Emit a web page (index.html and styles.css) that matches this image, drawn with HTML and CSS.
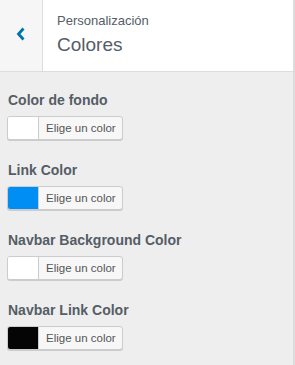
FILE: index.html
```html
<!DOCTYPE html>
<html>
<head>
  <meta charset="utf-8">
  <link rel="stylesheet" href="styles.css">
  <title>Colores</title>
</head>
<body>
  <div class="panel">
    <div class="panel-header">
      <button class="back-btn" aria-label="Volver">
        <svg width="10" height="14" viewBox="0 0 10 14"><path d="M7.5 1.5 L2.5 7 L7.5 12.5" fill="none" stroke="#0073aa" stroke-width="2.8"/></svg>
      </button>
      <div class="panel-title">
        <span class="crumb">Personalización</span>
        <h3>Colores</h3>
      </div>
    </div>

    <ul class="controls">
      <li class="control">
        <span class="control-title">Color de fondo</span>
        <button class="color-result"><span class="swatch" style="background:#fff"></span><span class="color-text">Elige un color</span></button>
      </li>
      <li class="control">
        <span class="control-title">Link Color</span>
        <button class="color-result"><span class="swatch" style="background:#008ef5"></span><span class="color-text">Elige un color</span></button>
      </li>
      <li class="control">
        <span class="control-title">Navbar Background Color</span>
        <button class="color-result"><span class="swatch" style="background:#fff"></span><span class="color-text">Elige un color</span></button>
      </li>
      <li class="control">
        <span class="control-title">Navbar Link Color</span>
        <button class="color-result"><span class="swatch" style="background:#050505"></span><span class="color-text">Elige un color</span></button>
      </li>
    </ul>
  </div>
</body>
</html>
```

FILE: styles.css
```css
body {
  margin: 0;
  font-family: "Liberation Sans", Arial, sans-serif;
  background: #eeeeee;
  color: #555d66;
}

.panel {
  height: 365px;
  border-right: 2px solid #dcdcdc;
  box-sizing: border-box;
}

.panel-header {
  display: flex;
  height: 71px;
  background: #fff;
  border-bottom: 1px solid #dddddd;
}

.back-btn {
  width: 43px;
  padding: 0;
  border: none;
  border-right: 1px solid #dddddd;
  background: #f6f6f6;
  display: flex;
  align-items: center;
  justify-content: center;
  cursor: pointer;
}

.back-btn svg {
  margin-top: -4px;
}

.panel-title {
  padding: 13px 0 0 14px;
}

.crumb {
  display: block;
  font-size: 13px;
  color: #555d66;
}

.panel-title h3 {
  margin: 6px 0 0;
  font-size: 19px;
  font-weight: 300;
  color: #555d66;
}

.controls {
  list-style: none;
  margin: 0;
  padding: 19px 0 0 7px;
}

.control {
  height: 70px;
}

.control-title {
  display: block;
  font-size: 14px;
  font-weight: bold;
  margin: 0 0 7px 1px;
  line-height: 18px;
}

.color-result {
  display: flex;
  height: 24px;
  padding: 0;
  border: 1px solid #cccccc;
  border-radius: 3px;
  background: #f7f7f7;
  box-shadow: 0 1px 0 #cccccc;
  overflow: hidden;
  cursor: pointer;
}

.swatch {
  width: 30px;
  height: 100%;
  border-right: 1px solid #cccccc;
}

.color-text {
  padding: 0 6px 0 7px;
  line-height: 22px;
  font-family: "Liberation Sans", Arial, sans-serif;
  font-size: 11.5px;
  color: #555555;
}
```
